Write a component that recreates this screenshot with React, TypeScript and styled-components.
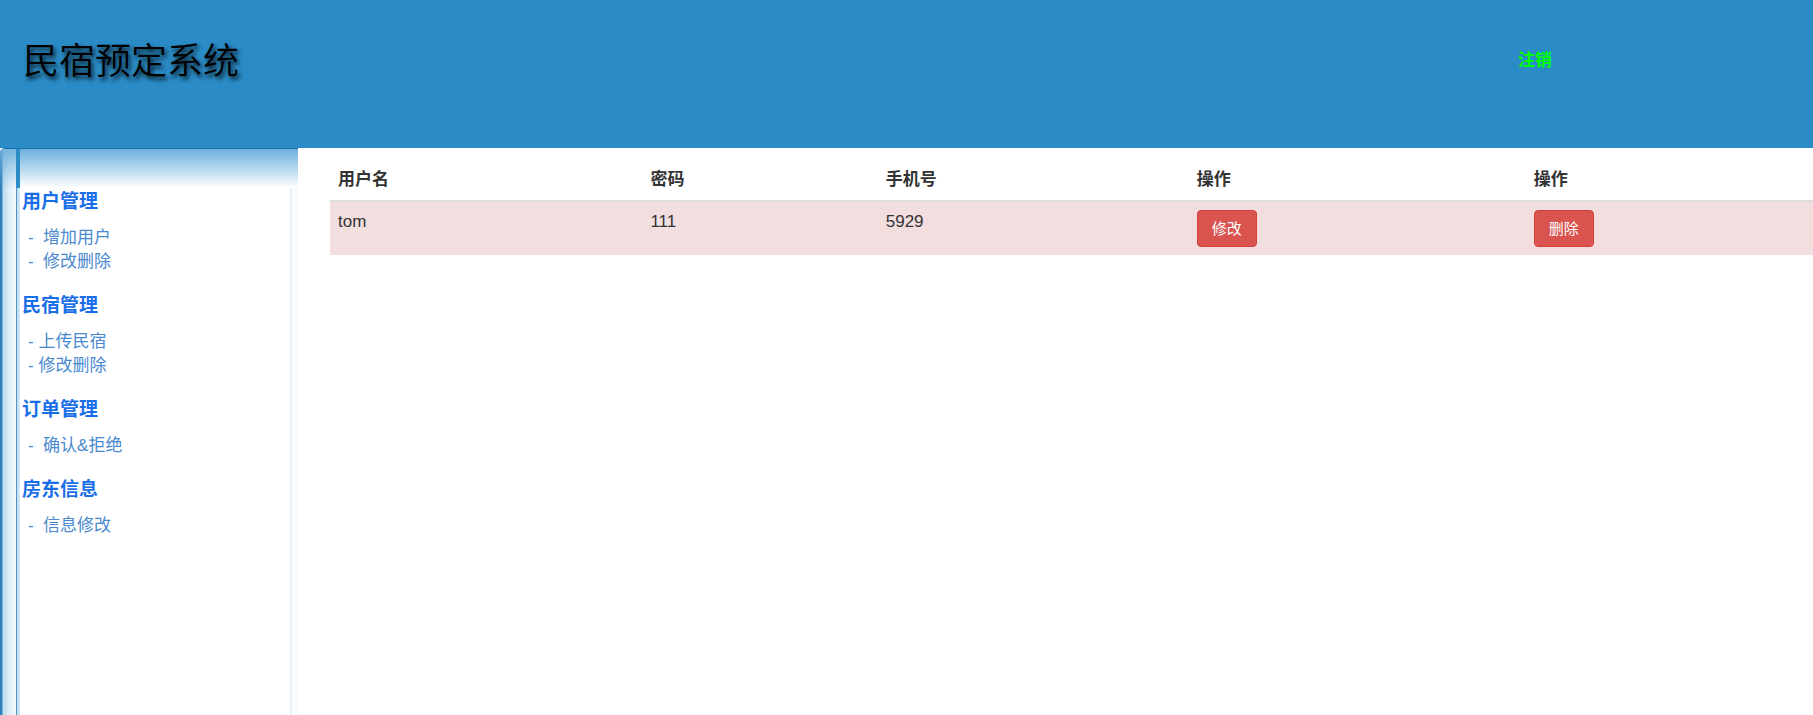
import React, { ReactElement } from "react";
import styled, { createGlobalStyle } from "styled-components";

const GlobalStyle = createGlobalStyle`
  html, body {
    margin: 0;
    padding: 0;
    background: #fff;
  }
  body {
    font-family: "Liberation Sans", "Noto Sans CJK SC", sans-serif;
    color: #333;
  }
`;

const Page = styled.div`
  min-height: 100vh;
  display: flex;
  flex-direction: column;
`;

const Header = styled.header`
  height: 148px;
  background: #2a8bc6;
  display: flex;
  justify-content: space-between;
  align-items: flex-start;
  padding: 0 261px 0 23px;
  box-sizing: border-box;
`;

const Title = styled.h1`
  margin: 38px 0 0;
  font-family: "Noto Sans CJK SC", sans-serif;
  font-size: 36px;
  line-height: 40px;
  font-weight: 350;
  color: #000;
  text-shadow: 2px 3px 4px rgba(0, 0, 0, 0.85);
`;

const Logout = styled.a`
  margin-top: 49px;
  font-size: 17px;
  line-height: 24px;
  font-weight: 700;
  color: #00ff00;
  text-decoration: none;
  cursor: pointer;
`;

const Body = styled.div`
  flex: 1;
  display: flex;
  align-items: stretch;
`;

const Sidebar = styled.aside`
  width: 298px;
  flex-shrink: 0;
  display: flex;
  border-top: 1px solid #1d6ea7;
  border-top-left-radius: 5px;
  overflow: hidden;
  box-sizing: border-box;
`;

const Rail = styled.div`
  width: 16px;
  background:
    linear-gradient(to bottom, rgba(106, 174, 220, 0.9) 0, rgba(255, 255, 255, 0) 40px) top left / 100% 40px no-repeat,
    linear-gradient(to right, #2d79b4 0, #3a88c2 2px, #bcdcf0 3px, #e3f1fa 10px, #f3f9fd 16px);
`;

const Spine = styled.div`
  width: 4px;
  background:
    linear-gradient(#2b8cc6, #2b8cc6) top left / 100% 39px no-repeat,
    linear-gradient(to right, #5a92c0 0, #5a92c0 1px, #b9ddf2 1px, #d6ebf8 4px);
`;

const Menu = styled.nav`
  flex: 1;
  padding: 41px 0 0 2px;
  background:
    linear-gradient(to bottom, #6cb0dd 0, #ffffff 39px) top left / 100% 39px no-repeat,
    #fff;
`;

const Edge = styled.div`
  width: 8px;
  background:
    linear-gradient(to bottom, #6cb0dd 0, #ffffff 39px) top left / 100% 39px no-repeat,
    linear-gradient(to right, #e6f3f9 0, #e6f3f9 2px, #f8fcfe 2px);
`;

const Group = styled.div`
  margin-bottom: 20px;
`;

const GroupTitle = styled.div`
  font-size: 19px;
  line-height: 24px;
  font-weight: 700;
  color: #1a6fe8;
  margin-bottom: 12px;
`;

const Item = styled.a`
  display: block;
  padding-left: 6px;
  font-size: 17px;
  line-height: 24px;
  color: #4a89cf;
  text-decoration: none;
  white-space: pre;
  cursor: pointer;
`;

const Main = styled.main`
  flex: 1;
  padding: 12px 0 0 32px;
  overflow: hidden;
`;

const Table = styled.table`
  width: 1483px;
  border-collapse: collapse;
  border-spacing: 0;
  font-size: 17px;
  line-height: 24px;
`;

const Th = styled.th<{ $w: number }>`
  width: ${(p) => p.$w}px;
  text-align: left;
  vertical-align: bottom;
  padding: 8px;
  font-weight: 700;
  color: #333;
  border-bottom: 2px solid #ddd;
`;

const Row = styled.tr`
  background: #f2dede;
`;

const Td = styled.td`
  vertical-align: top;
  padding: 8px;
  color: #333;
`;

const DangerButton = styled.button`
  font-family: inherit;
  font-size: 15px;
  line-height: 21px;
  padding: 7px 14px;
  color: #fff;
  background: #d9534f;
  border: 1px solid #d43f3a;
  border-radius: 4px;
  cursor: pointer;
`;

const menu = [
  { title: "用户管理", items: ["-  增加用户", "-  修改删除"] },
  { title: "民宿管理", items: ["- 上传民宿", "- 修改删除"] },
  { title: "订单管理", items: ["-  确认&拒绝"] },
  { title: "房东信息", items: ["-  信息修改"] },
];

const columns = [
  { label: "用户名", w: 314 },
  { label: "密码", w: 232 },
  { label: "手机号", w: 312 },
  { label: "操作", w: 339 },
  { label: "操作", w: 286 },
];

const users = [{ name: "tom", password: "111", phone: "5929" }];

const App = (): ReactElement => {
  return (
    <Page>
      <GlobalStyle />
      <Header>
        <Title>民宿预定系统</Title>
        <Logout>注销</Logout>
      </Header>
      <Body>
        <Sidebar>
          <Rail />
          <Spine />
          <Menu>
            {menu.map((g) => (
              <Group key={g.title}>
                <GroupTitle>{g.title}</GroupTitle>
                {g.items.map((it) => (
                  <Item key={it}>{it}</Item>
                ))}
              </Group>
            ))}
          </Menu>
          <Edge />
        </Sidebar>
        <Main>
          <Table>
            <thead>
              <tr>
                {columns.map((c, i) => (
                  <Th key={i} $w={c.w}>
                    {c.label}
                  </Th>
                ))}
              </tr>
            </thead>
            <tbody>
              {users.map((u) => (
                <Row key={u.name}>
                  <Td>{u.name}</Td>
                  <Td>{u.password}</Td>
                  <Td>{u.phone}</Td>
                  <Td>
                    <DangerButton>修改</DangerButton>
                  </Td>
                  <Td>
                    <DangerButton>删除</DangerButton>
                  </Td>
                </Row>
              ))}
            </tbody>
          </Table>
        </Main>
      </Body>
    </Page>
  );
};

export default App;
